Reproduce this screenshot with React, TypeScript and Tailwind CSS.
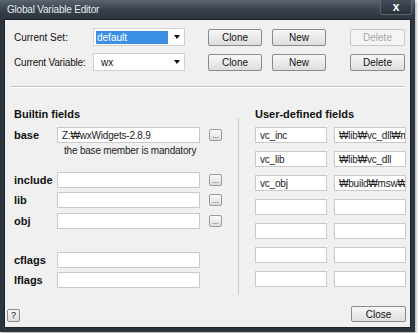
import React from "react"

const btn =
  "h-full flex items-center justify-center rounded-[2px] border border-[#8a8a8a] bg-gradient-to-b from-[#f7f7f7] to-[#dddddd] text-[10px] text-[#111]"

// small "..." browse button
const Dots = () => (
  <div className="w-[13px] h-[12px] ml-[9px] flex items-end justify-center rounded-[2px] border border-[#9a9a9a] bg-gradient-to-b from-[#fafafa] to-[#dedede] text-[8px] leading-[9px] text-[#333]">
    ...
  </div>
)

const Field = ({ value = "", w }: { value?: string; w: string }) => (
  <div className={`${w} h-[16px] flex items-center overflow-hidden whitespace-nowrap bg-white border border-[#c9c9c9] px-[4px] text-[10px] tracking-[-0.2px] text-[#222]`}>
    {value}
  </div>
)

const Combo = ({ value, selected }: { value: string; selected?: boolean }) => (
  <div className="w-[92px] h-[18px] flex items-center bg-white border border-[#d0d0d0] pl-[2px] pr-[4px]">
    <div
      className={
        selected
          ? "flex-1 h-[13px] flex items-center bg-[#3b8fe4] text-white text-[10px] px-[1px]"
          : "flex-1 h-[13px] flex items-center text-[#111] text-[10px] px-[5px]"
      }
    >
      {value}
    </div>
    <div className="ml-[6px] w-0 h-0 border-l-[3px] border-r-[3px] border-t-[4px] border-l-transparent border-r-transparent border-t-[#111]" />
  </div>
)

const BuiltinRow = ({ label, value, dots, mt }: { label: string; value?: string; dots?: boolean; mt: string }) => (
  <div className={`flex items-center h-[16px] ${mt}`}>
    <div className="w-[43px] text-[11px] font-bold text-[#111]">{label}</div>
    <Field w="w-[143px]" value={value} />
    {dots && <Dots />}
  </div>
)

const userRows = [
  ["vc_inc", "₩lib₩vc_dll₩m"],
  ["vc_lib", "₩lib₩vc_dll"],
  ["vc_obj", "₩build₩msw₩"],
  ["", ""],
  ["", ""],
  ["", ""],
  ["", ""],
]

export default function App() {
  return (
    <div className="w-[420px] h-[333px] bg-white font-['Liberation_Sans',Arial,sans-serif]">
      <div className="w-[415px] h-[332px] flex flex-col bg-[#2c343e] shadow-[1px_1px_3px_rgba(0,0,0,0.4)]">
        {/* title bar */}
        <div className="h-[19px] flex justify-between bg-gradient-to-b from-[#5b6570] via-[#39424d] to-[#2c343e]">
          <div className="pl-[7px] pt-[4px] text-[10px] leading-[12px] tracking-[-0.2px] text-[#e8ecf0]">Global Variable Editor</div>
          <div className="w-[32px] h-[15px] mr-[3px] flex items-center justify-center rounded-b-[3px] border border-t-0 border-[#5c6672] bg-gradient-to-b from-[#434c57] to-[#2a313a] text-[12px] font-bold leading-none text-white">
            x
          </div>
        </div>

        {/* client area */}
        <div className="flex-1 mx-[4px] mb-[4px] flex flex-col bg-[#f0f0f0] border border-[#1d232a]">
          <div className="pl-[9px] pr-[4px] pt-[8px]">
            <div className="flex items-center h-[18px]">
              <div className="w-[79px] whitespace-nowrap text-[10px] text-[#111]">Current Set:</div>
              <Combo value="default" selected />
              <div className="flex h-[17px] ml-[23px]">
                <div className={`${btn} w-[54px]`}>Clone</div>
                <div className={`${btn} w-[54px] ml-[10px]`}>New</div>
                <div className="w-[55px] ml-[24px] h-full flex items-center justify-center rounded-[2px] border border-[#c8c8c8] bg-[#f4f4f4] text-[10px] text-[#a6a6a6]">
                  Delete
                </div>
              </div>
            </div>
            <div className="flex items-center h-[18px] mt-[7px]">
              <div className="w-[79px] whitespace-nowrap text-[10px] tracking-[-0.2px] text-[#111]">Current Variable:</div>
              <Combo value="wx" />
              <div className="flex h-[17px] ml-[23px]">
                <div className={`${btn} w-[54px]`}>Clone</div>
                <div className={`${btn} w-[54px] ml-[10px]`}>New</div>
                <div className={`${btn} w-[55px] ml-[24px]`}>Delete</div>
              </div>
            </div>
          </div>

          <div className="mx-[5px] mt-[15px] h-[2px] border-t border-[#c4c4c4] border-b-white border-b" />

          {/* fields */}
          <div className="flex pl-[9px] pr-[4px] mt-[19px]">
            <div className="w-[208px] flex flex-col">
              <div className="h-[14px] text-[11px] font-bold text-[#111] leading-[14px]">Builtin fields</div>
              <BuiltinRow label="base" value="Z:₩wxWidgets-2.8.9" dots mt="mt-[6px]" />
              <div className="pl-[50px] mt-[1px] text-[10px] tracking-[-0.2px] leading-[13px] text-[#222]">the base member is mandatory</div>
              <BuiltinRow label="include" dots mt="mt-[15px]" />
              <BuiltinRow label="lib" dots mt="mt-[4px]" />
              <BuiltinRow label="obj" dots mt="mt-[5px]" />
              <BuiltinRow label="cflags" mt="mt-[23px]" />
              <BuiltinRow label="lflags" mt="mt-[4px]" />
            </div>
            <div className="w-[1px] ml-[16px] mt-[11px] h-[177px] bg-[#c8c8c8]" />
            <div className="ml-[16px] flex flex-col">
              <div className="h-[14px] text-[11px] font-bold text-[#111] leading-[14px]">User-defined fields</div>
              <div className="mt-[6px] flex flex-col gap-[8px]">
                {userRows.map((r, i) => (
                  <div key={i} className="flex gap-[7px]">
                    <Field w="w-[72px]" value={r[0]} />
                    <Field w="w-[72px]" value={r[1]} />
                  </div>
                ))}
              </div>
            </div>
          </div>

          <div className="mt-auto mb-[5px] pl-[2px] pr-[4px] flex items-end justify-between">
            <div className="w-[13px] h-[13px] flex items-center justify-center rounded-[2px] border border-[#8c8c8c] bg-gradient-to-b from-[#f8f8f8] to-[#dcdcdc] text-[9px] text-[#111]">
              ?
            </div>
            <div className={`${btn} w-[55px] !h-[16px]`}>Close</div>
          </div>
        </div>
      </div>
    </div>
  )
}
